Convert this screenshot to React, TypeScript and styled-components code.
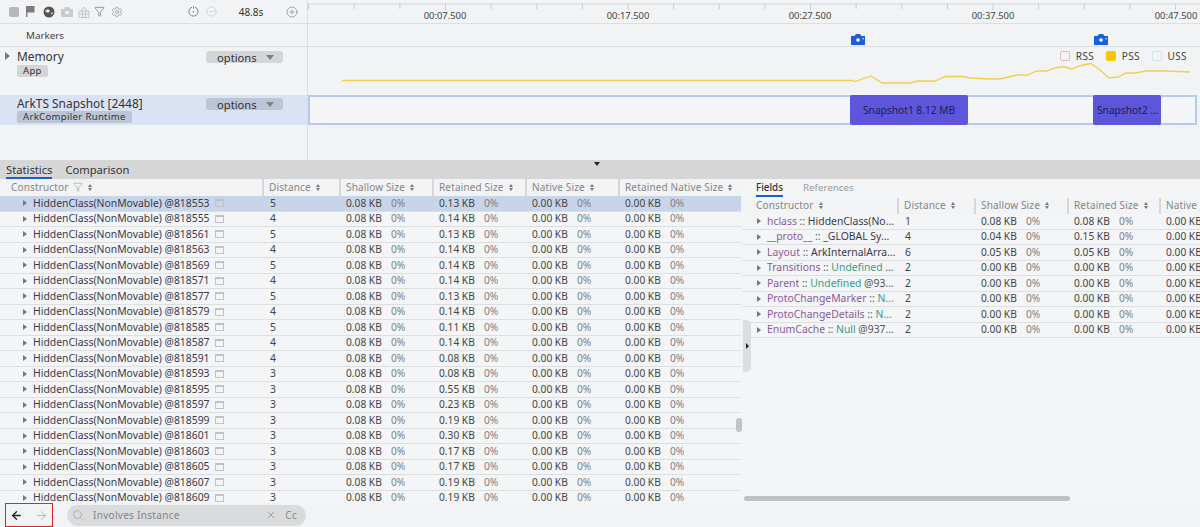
import React from "react";
import styled, { createGlobalStyle } from "styled-components";
import { ArrowLeft, ArrowRight, CircleMinus, CirclePlus, Funnel, Search, Settings, X } from "lucide-react";

const Global = createGlobalStyle`
  html, body { margin: 0; padding: 0; background: #f1f3f5; }
  * { box-sizing: border-box; }
`;

const Page = styled.div`
  width: 1200px; height: 527px; overflow: hidden; position: relative;
  display: flex; flex-direction: column; background: #f1f3f5;
  font-family: "Noto Sans", "Open Sans", sans-serif; color: #333;
`;
const TopPane = styled.div`height: 160px; display: flex; flex-direction: column; flex: none;`;
const TrackRow = styled.div<{ $h: number; $border?: boolean }>`
  height: ${p => p.$h}px; flex: none; display: flex;
  border-bottom: ${p => (p.$border ? "1px solid #dcdfe2" : "none")};
`;
const Side = styled.div<{ $active?: boolean }>`
  width: 308px; flex: none; position: relative; display: flex; align-items: center;
  border-right: 1px solid #dcdfe2; background: ${p => (p.$active ? "#dae3f3" : "transparent")};
`;
const Track = styled.div`flex: 1; position: relative; min-width: 0;`;
const ToolIcons = styled.div`display: flex; align-items: center; padding-left: 9px; width: 188px; flex: none; color: #8c8c8c;`;
const ToolSlot = styled.span<{ $w: number }>`width: ${p => p.$w}px; display: flex; align-items: center; flex: none;`;
const Duration = styled.span`font-size: 10px; color: #333; width: 58px; text-align: center; margin: 0 6px 0 5px;`;
const TimerSlot = styled.span<{ $w: number; $c: string }>`width: ${p => p.$w}px; display: flex; flex: none; color: ${p => p.$c};`;
const TickLabel = styled.span<{ $x: number }>`
  position: absolute; left: ${p => p.$x}px; top: 9px; transform: translateX(-50%);
  font-size: 9.4px; color: #444; line-height: 14px;
`;
const RulerSvg = styled.svg`display: block; position: absolute; inset: 0;`;
const MarkersLabel = styled.span`font-size: 9.8px; color: #444; padding-left: 26px;`;
const Cam = styled.svg<{ $x: number }>`position: absolute; left: ${p => p.$x}px; top: 10px;`;
const TrackTitle = styled.div<{ $top: number }>`
  position: absolute; left: 17px; top: ${p => p.$top}px; font-size: 11.9px; line-height: 16px; color: #333;
`;
const Chip = styled.span<{ $active?: boolean; $top: number }>`
  position: absolute; left: 17px; top: ${p => p.$top}px; height: 12px; padding: 0 6px; border-radius: 2px;
  background: ${p => (p.$active ? "#bcc5d3" : "#d3d5d8")}; font-size: 9.5px; line-height: 12px; color: #333; letter-spacing: .35px;
`;
const Options = styled.span<{ $active?: boolean; $top: number }>`
  position: absolute; left: 206px; top: ${p => p.$top}px; width: 77px; height: 12px; border-radius: 3px;
  background: ${p => (p.$active ? "#bcc5d3" : "#d3d5d8")}; display: flex; align-items: center;
  padding-left: 11px; font-size: 11.2px; color: #333;
`;
const Caret = styled.i`
  margin-left: 9px; width: 0; height: 0; border-left: 4px solid transparent; border-right: 4px solid transparent;
  border-top: 5px solid #7f7f7f;
`;
const Expand = styled.i`
  position: absolute; left: 5px; top: 5px; width: 0; height: 0;
  border-top: 4px solid transparent; border-bottom: 4px solid transparent; border-left: 5px solid #7a7a7a;
`;
const MemChart = styled.svg`position: absolute; inset: 0; display: block;`;
const Legend = styled.div`position: absolute; right: 13px; top: 4px; display: flex; align-items: center; font-size: 10px; color: #444; letter-spacing: .4px; line-height: 10px;`;
const LegendBox = styled.i<{ $border: string; $fill?: string }>`
  width: 9.5px; height: 9.5px; border-radius: 2px; margin: 0 6px 0 12px;
  border: 1px solid ${p => p.$border}; background: ${p => p.$fill ?? "transparent"};
`;
const SnapTrack = styled.div`
  flex: 1; position: relative; height: 30px; margin-right: 3px; border: 2px solid #b7c9ee; background: #f3f5f7;
`;
const Snapshot = styled.div<{ $x: number; $w: number; $pad: number }>`
  position: absolute; left: ${p => p.$x}px; top: -2px; width: ${p => p.$w}px; height: 30px; border-radius: 2px;
  background: #5e56da; color: #1f1d4f; font-size: 10.2px; line-height: 30px; padding-left: ${p => p.$pad}px; white-space: nowrap;
`;

const TabBar = styled.div`
  height: 19px; flex: none; background: #d6d6d6; position: relative; display: flex; align-items: flex-end; gap: 13px; padding-left: 6px;
`;
const Tab = styled.span<{ $on?: boolean }>`
  font-size: 11.2px; line-height: 15px; height: 17px; color: #333;
  border-bottom: 2px solid ${p => (p.$on ? "#1a5fd0" : "transparent")};
`;
const Drop = styled.i`
  position: absolute; left: 594px; top: 2px; width: 0; height: 0;
  border-left: 3.5px solid transparent; border-right: 3.5px solid transparent; border-top: 4px solid #222;
`;
const Body = styled.div`flex: 1; min-height: 0; display: flex;`;
const LeftPanel = styled.div`width: 741px; flex: none; overflow: hidden; position: relative;`;
const RightPanel = styled.div`flex: 1; min-width: 0; overflow: hidden; position: relative; margin-left: 2px; background: #f3f5f7;`;

const TableHead = styled.div<{ $cols: string }>`
  height: 17px; display: grid; grid-template-columns: ${p => p.$cols}; align-items: center; background: #f1f3f5;
`;
const HeadCell = styled.div<{ $pad: number }>`
  height: 100%; display: flex; align-items: center; gap: 4px; white-space: nowrap; line-height: 15px; padding-bottom: 1px;
  padding-left: ${p => p.$pad}px; font-size: 10px; color: #868686; letter-spacing: .15px;
`;
const HeadColumn = styled(HeadCell)`border-left: 2px solid #d6d6d6;`;
const Sort = styled.span`display: inline-flex; flex-direction: column; gap: 1px; margin-left: 1px;`;
const SortUp = styled.i`width: 0; height: 0; border-left: 2.5px solid transparent; border-right: 2.5px solid transparent; border-bottom: 3px solid #777;`;
const SortDown = styled.i`width: 0; height: 0; border-left: 2.5px solid transparent; border-right: 2.5px solid transparent; border-top: 3px solid #777;`;
const Row = styled.div<{ $cols: string; $sel?: boolean }>`
  height: 15.5px; display: grid; grid-template-columns: ${p => p.$cols}; align-items: center; line-height: 11px;
  background: ${p => (p.$sel ? "#c8d4e8" : "#f3f5f7")}; border-bottom: 1px solid #dedfe1;
`;
const NameCell = styled.div<{ $pad: number }>`
  display: flex; align-items: center; padding-left: ${p => p.$pad}px; font-size: 10.4px; color: #3a3a4a; white-space: nowrap;
`;
const RowArrow = styled.i`
  flex: none; width: 0; height: 0; margin-right: 6px;
  border-top: 3.5px solid transparent; border-bottom: 3.5px solid transparent; border-left: 4.5px solid #777;
`;
const MemoIcon = styled.i`width: 9px; height: 8px; margin-left: 5px; border: 1px solid #bfc3c9; border-top-width: 2px; flex: none;`;
const NumCell = styled.div`padding-left: 8px; font-size: 10.4px; color: #444;`;
const SizeCell = styled.div`padding-left: 7px; font-size: 10.2px; color: #444; display: flex; white-space: nowrap;`;
const SizeVal = styled.span`width: 45px; flex: none;`;
const Pct = styled.span`color: #808080;`;
const Prop = styled.span`color: #8a5a9a;`;
const Type = styled.span`color: #3a9a8a;`;
const Sep = styled.span`color: #555; white-space: pre;`;

const ScrollV = styled.i`position: absolute; left: 736px; top: 418px; width: 6px; height: 14px; border-radius: 3px; background: #c2c4c6;`;
const ScrollH = styled.i`position: absolute; left: 1px; top: 317px; width: 326px; height: 5px; border-radius: 3px; background: #bfc1c3;`;
const Handle = styled.div`
  position: absolute; left: 743px; top: 320px; width: 8px; height: 52px; background: #dcdee0;
  border-radius: 0 5px 5px 0; display: flex; align-items: center; padding-left: 3px;
`;
const HandleArrow = styled.i`width: 0; height: 0; border-top: 3px solid transparent; border-bottom: 3px solid transparent; border-left: 3.5px solid #222;`;

const SubTabs = styled.div`height: 18px; display: flex; align-items: flex-end; gap: 20px; padding-left: 13px; background: #f3f5f7;`;
const SubTab = styled.span<{ $on?: boolean }>`
  font-size: 9.8px; height: 17px; line-height: 15px; color: ${p => (p.$on ? "#333" : "#9a9a9a")};
  font-weight: ${p => (p.$on ? 500 : 400)}; border-bottom: 2px solid ${p => (p.$on ? "#1a5fd0" : "transparent")};
`;
const SubHead = styled(TableHead)`margin-top: 1px; height: 16px;`;

const Footer = styled.div`height: 24px; flex: none; display: flex; align-items: center; padding-left: 5px; background: #f1f3f5;`;
const NavBox = styled.div`
  width: 48px; height: 24px; border: 1.5px solid #d8262c; display: flex; align-items: center; justify-content: space-between; padding: 0 4px;
`;
const SearchPill = styled.div`
  margin-left: 14px; width: 239px; height: 21px; border-radius: 11px; background: #d9dbdd; display: flex; align-items: center;
  padding: 0 9px 0 5px; color: #8a8a8a; font-size: 10px; letter-spacing: .3px;
`;
const SearchText = styled.span`flex: 1; margin-left: 9px; color: #858585;`;
const Cc = styled.span`margin-left: 8px; font-size: 10px; color: #888;`;

const leftCols = "262px 77px 93px 93px 93px 123px";
const rightCols = "154px 77px 93px 92px 92px";

const ids = [
  ["818553", 5, "0.13"], ["818555", 4, "0.14"], ["818561", 5, "0.13"], ["818563", 4, "0.14"], ["818569", 5, "0.14"],
  ["818571", 4, "0.14"], ["818577", 5, "0.13"], ["818579", 4, "0.14"], ["818585", 5, "0.11"], ["818587", 4, "0.14"],
  ["818591", 4, "0.08"], ["818593", 3, "0.08"], ["818595", 3, "0.55"], ["818597", 3, "0.23"], ["818599", 3, "0.19"],
  ["818601", 3, "0.30"], ["818603", 3, "0.17"], ["818605", 3, "0.17"], ["818607", 3, "0.19"], ["818609", 3, "0.19"],
] as const;

const fields: [React.ReactNode, number, string, string][] = [
  [<><Prop>hclass</Prop><Sep> :: </Sep>HiddenClass(No...</>, 1, "0.08", "0.08"],
  [<><Prop>__proto__</Prop><Sep> :: </Sep>_GLOBAL Sy...</>, 4, "0.04", "0.15"],
  [<><Prop>Layout</Prop><Sep> :: </Sep>ArkInternalArra...</>, 6, "0.05", "0.05"],
  [<><Prop>Transitions</Prop><Sep> :: </Sep><Type>Undefined</Type><Sep> ...</Sep></>, 2, "0.00", "0.00"],
  [<><Prop>Parent</Prop><Sep> :: </Sep><Type>Undefined</Type><Sep> @93...</Sep></>, 2, "0.00", "0.00"],
  [<><Prop>ProtoChangeMarker</Prop><Sep> :: </Sep><Type>N...</Type></>, 2, "0.00", "0.00"],
  [<><Prop>ProtoChangeDetails</Prop><Sep> :: </Sep><Type>N...</Type></>, 2, "0.00", "0.00"],
  [<><Prop>EnumCache</Prop><Sep> :: </Sep><Type>Null</Type><Sep> @937...</Sep></>, 2, "0.00", "0.00"],
];

const SortIcon = () => <Sort><SortUp /><SortDown /></Sort>;
const Size = ({ v }: { v: string }) => <SizeCell><SizeVal>{v} KB</SizeVal><Pct>0%</Pct></SizeCell>;
const Camera = ({ x }: { x: number }) => (
  <Cam $x={x} width="14" height="11" viewBox="0 0 14 11">
    <path d="M0 2h3.5L5 0h4l1.5 2H14v9H0z" fill="#1a5fe0" />
    <circle cx="7" cy="6" r="1.8" fill="#fff" />
    <rect x="11.5" y="4" width="1.2" height="1.2" fill="#fff" />
  </Cam>
);
const Ticks = () => {
  const items = [];
  for (let i = 0; i < 20; i++) {
    const x = 0.6 + i * 45.63;
    items.push(<line key={i} x1={x} x2={x} y1={4} y2={(i - 3) % 4 === 0 ? 10 : 9} stroke="#c9ccd0" />);
  }
  return (
    <RulerSvg width="892" height="24">
      <line x1="0" x2="892" y1="4" y2="4" stroke="#d5d7da" />
      {items}
    </RulerSvg>
  );
};
const pts = "34,33.5 545,33.5 547,34.5 563,29 574,36 602,36 610,34 627,34 637,29.5 655,29.5 662,31 682,32 692,32 709,28 719,28 729,24 739,24 747,21 755,19.5 764,22 773,18.5 783,16.5 792,23 801,31 810,30 818,26 828,26 837,24 857,24 882,25";

export default function App() {
  return (
    <Page>
      <Global />
      <TopPane>
        <TrackRow $h={24} $border>
          <Side>
            <ToolIcons>
              <ToolSlot $w={17}>
                <svg width="10" height="10" viewBox="0 0 10 10"><rect width="10" height="10" rx="2" fill="#b5b7ba" /></svg>
              </ToolSlot>
              <ToolSlot $w={17}>
                <svg width="9" height="11" viewBox="0 0 9 11"><path d="M0 0h8.5v6.5H1.4V11H0z" fill="#7c7c7c" /></svg>
              </ToolSlot>
              <ToolSlot $w={18}>
                <svg width="12" height="12" viewBox="0 0 12 12"><circle cx="6" cy="6" r="5.5" fill="#565656" /><path d="M2 5l3-2 2 2-2 2zM8 7l2-1-1 3z" fill="#eee" /></svg>
              </ToolSlot>
              <ToolSlot $w={17}>
                <svg width="12" height="10" viewBox="0 0 12 10"><path d="M0 2h3l1-2h4l1 2h3v8H0z" fill="#c8cacc" /><circle cx="6" cy="5.5" r="1.8" fill="#f1f3f5" /></svg>
              </ToolSlot>
              <ToolSlot $w={16}>
                <svg width="12" height="12" viewBox="0 0 12 12" fill="none" stroke="#c4c6c9" strokeWidth="1"><path d="M1 5h10v6.5H1zM3 5l3-4 3 4M1 8h10M4.5 5v6.5M7.5 5v6.5" /></svg>
              </ToolSlot>
              <ToolSlot $w={17}>
                <Funnel size={11} strokeWidth={1.5} color="#6f6f6f" />
              </ToolSlot>
              <ToolSlot $w={17}>
                <Settings size={12} strokeWidth={1.3} color="#8a8a8a" />
              </ToolSlot>
            </ToolIcons>
            <TimerSlot $w={18} $c="#777">
              <svg width="11" height="11" viewBox="0 0 11 11" fill="none" stroke="#777" strokeWidth=".9"><path d="M4 1.2A4.6 4.6 0 1 0 7 1.2" /><path d="M5.5 .3v2.4" /><circle cx="5.5" cy="5.8" r=".8" fill="#777" stroke="none" /></svg>
            </TimerSlot>
            <TimerSlot $w={11} $c="#bcbcbc"><CircleMinus size={11} strokeWidth={1.1} /></TimerSlot>
            <Duration>48.8s</Duration>
            <TimerSlot $w={12} $c="#666"><CirclePlus size={12} strokeWidth={1.1} /></TimerSlot>
          </Side>
          <Track>
            <Ticks />
            <TickLabel $x={137}>00:07.500</TickLabel>
            <TickLabel $x={320}>00:17.500</TickLabel>
            <TickLabel $x={502}>00:27.500</TickLabel>
            <TickLabel $x={685}>00:37.500</TickLabel>
            <TickLabel $x={868}>00:47.500</TickLabel>
          </Track>
        </TrackRow>
        <TrackRow $h={23} $border>
          <Side><MarkersLabel>Markers</MarkersLabel></Side>
          <Track>
            <Camera x={543} />
            <Camera x={786} />
          </Track>
        </TrackRow>
        <TrackRow $h={48}>
          <Side>
            <Expand />
            <TrackTitle $top={1}>Memory</TrackTitle>
            <Chip $top={18}>App</Chip>
            <Options $top={4}>options<Caret /></Options>
          </Side>
          <Track>
            <MemChart width="892" height="48" viewBox="0 0 892 48">
              <polyline points={pts} fill="none" stroke="#f0cf4e" strokeWidth="1.3" />
            </MemChart>
            <Legend>
              <LegendBox $border="#e8b8c0" />RSS
              <LegendBox $border="#f5c800" $fill="#f5c800" />PSS
              <LegendBox $border="#cfe3e0" />USS
            </Legend>
          </Track>
        </TrackRow>
        <TrackRow $h={30}>
          <Side $active>
            <TrackTitle $top={0}>ArkTS Snapshot [2448]</TrackTitle>
            <Chip $active $top={16}>ArkCompiler Runtime</Chip>
            <Options $active $top={3}>options<Caret /></Options>
          </Side>
          <SnapTrack>
            <Snapshot $x={540} $w={118} $pad={13}>Snapshot1 8.12 MB</Snapshot>
            <Snapshot $x={783} $w={68} $pad={4}>Snapshot2 ...</Snapshot>
          </SnapTrack>
        </TrackRow>
        <TrackRow $h={35}><Side /></TrackRow>
      </TopPane>
      <TabBar>
        <Tab $on>Statistics</Tab>
        <Tab>Comparison</Tab>
        <Drop />
      </TabBar>
      <Body>
        <LeftPanel>
          <TableHead $cols={leftCols}>
            <HeadCell $pad={11}>Constructor <Funnel size={10} strokeWidth={1.2} color="#888" /><SortIcon /></HeadCell>
            {["Distance", "Shallow Size", "Retained Size", "Native Size", "Retained Native Size"].map(h => (
              <HeadColumn key={h} $pad={5}>{h}<SortIcon /></HeadColumn>
            ))}
          </TableHead>
          {ids.map(([id, d, r], i) => (
            <Row key={id} $cols={leftCols} $sel={i === 0}>
              <NameCell $pad={23}><RowArrow />HiddenClass(NonMovable) @{id}<MemoIcon /></NameCell>
              <NumCell>{d}</NumCell>
              <Size v="0.08" />
              <Size v={r} />
              <Size v="0.00" />
              <Size v="0.00" />
            </Row>
          ))}
        </LeftPanel>
        <RightPanel>
          <SubTabs>
            <SubTab $on>Fields</SubTab>
            <SubTab>References</SubTab>
          </SubTabs>
          <SubHead $cols={rightCols}>
            <HeadCell $pad={13}>Constructor<SortIcon /></HeadCell>
            {["Distance", "Shallow Size", "Retained Size", "Native Size"].map(h => (
              <HeadColumn key={h} $pad={5}>{h}<SortIcon /></HeadColumn>
            ))}
          </SubHead>
          {fields.map(([n, d, s, r], i) => (
            <Row key={i} $cols={rightCols}>
              <NameCell $pad={14}><RowArrow />{n}</NameCell>
              <NumCell>{d}</NumCell>
              <Size v={s} />
              <Size v={r} />
              <Size v="0.00" />
            </Row>
          ))}
          <ScrollH />
        </RightPanel>
      </Body>
      <Footer>
        <NavBox>
          <ArrowLeft size={13} strokeWidth={2.4} color="#222" />
          <ArrowRight size={13} strokeWidth={1.6} color="#a8a8a8" />
        </NavBox>
        <SearchPill>
          <Search size={12} strokeWidth={1.2} color="#999" />
          <SearchText>Involves Instance</SearchText>
          <X size={12} strokeWidth={1.2} color="#777" />
          <Cc>Cc</Cc>
        </SearchPill>
      </Footer>
      <ScrollV />
      <Handle><HandleArrow /></Handle>
    </Page>
  );
}
